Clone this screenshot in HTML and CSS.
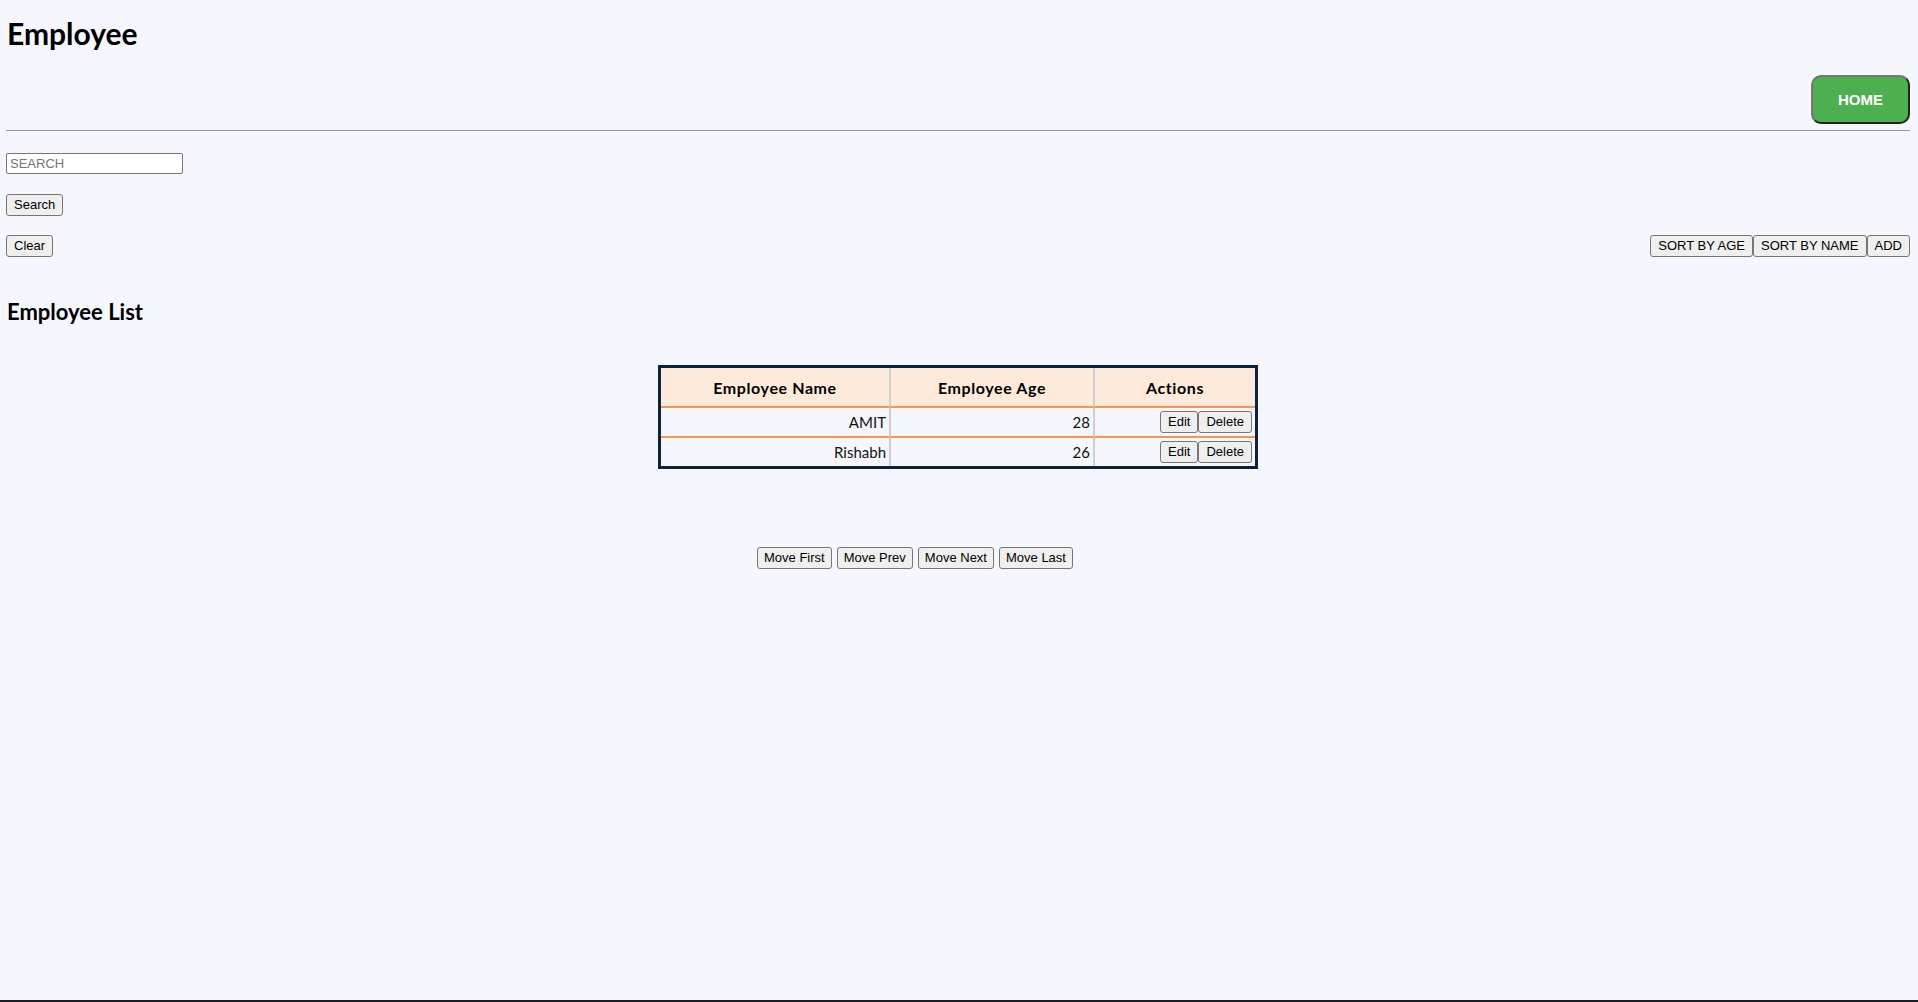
FILE: index.html
```html
<!DOCTYPE html>
<html lang="en">
<head>
<meta charset="utf-8">
<title>Employee</title>
<link rel="stylesheet" href="styles.css">
</head>
<body>
<div class="page">
  <header class="header">
    <h1 class="title">Employee</h1>
    <div class="nav">
      <button class="home-btn" type="button">HOME</button>
    </div>
    <hr class="divider">
  </header>

  <section class="controls">
    <input class="search-input" type="text" placeholder="SEARCH">
    <div class="search-row">
      <button class="btn" type="button">Search</button>
    </div>
    <div class="tool-row">
      <button class="btn" type="button">Clear</button>
      <div class="btn-group">
        <button class="btn" type="button">SORT BY AGE</button>
        <button class="btn" type="button">SORT BY NAME</button>
        <button class="btn" type="button">ADD</button>
      </div>
    </div>
  </section>

  <h2 class="subtitle">Employee List</h2>

  <table class="emp-table">
    <thead>
      <tr>
        <th class="col-name">Employee Name</th>
        <th class="col-age sep">Employee Age</th>
        <th class="col-actions sep">Actions</th>
      </tr>
    </thead>
    <tbody>
      <tr>
        <td>AMIT</td>
        <td class="sep">28</td>
        <td class="sep actions"><span class="btn-group"><button class="btn" type="button">Edit</button><button class="btn" type="button">Delete</button></span></td>
      </tr>
      <tr>
        <td>Rishabh</td>
        <td class="sep">26</td>
        <td class="sep actions"><span class="btn-group"><button class="btn" type="button">Edit</button><button class="btn" type="button">Delete</button></span></td>
      </tr>
    </tbody>
  </table>

  <div class="pager">
    <button class="btn pager-btn" type="button">Move First</button>
    <button class="btn pager-btn" type="button">Move Prev</button>
    <button class="btn pager-btn" type="button">Move Next</button>
    <button class="btn pager-btn" type="button">Move Last</button>
  </div>
</div>
</body>
</html>
```

FILE: styles.css
```css
* {
  box-sizing: border-box;
}

html, body {
  margin: 0;
  padding: 0;
}

body {
  background: #f5f6fe;
  color: #000;
  font-family: "Liberation Sans", Arial, sans-serif;
}

.page {
  min-height: 100vh;
  padding: 0 8px 0 6px;
  border-bottom: 2px solid #1c1c20;
  display: flex;
  flex-direction: column;
}

.title {
  margin: 15px 0 0 1px;
  font-family: Lato, "Open Sans", sans-serif;
  font-weight: 700;
  font-size: 30px;
  line-height: 36px;
}

.nav {
  display: flex;
  justify-content: flex-end;
  margin-top: 24px;
}

.home-btn {
  width: 99px;
  height: 49px;
  background: #4caf50;
  color: #fff;
  font-family: "Liberation Sans", Arial, sans-serif;
  font-weight: 700;
  font-size: 15px;
  border-radius: 10px;
  border: 2px solid;
  border-color: #767676 #222 #222 #767676;
  padding: 0;
}

.divider {
  margin: 6px 0 0 0;
  height: 0;
  border: 0;
  border-top: 1px solid #9a9a9a;
}

.controls {
  display: flex;
  flex-direction: column;
  margin-top: 22px;
}

.search-input {
  width: 177px;
  height: 21px;
  border: 1px solid #767676;
  border-radius: 2px;
  background: #fff;
  padding: 0 3px;
  font-family: "Liberation Sans", Arial, sans-serif;
  font-size: 13px;
  color: #000;
}

.search-input::placeholder {
  color: #757575;
}

.search-row {
  margin-top: 20px;
  display: flex;
}

.tool-row {
  margin-top: 19px;
  display: flex;
  justify-content: space-between;
  align-items: center;
}

.btn-group {
  display: inline-flex;
}

.btn {
  height: 22px;
  padding: 0 7px;
  border: 1px solid #767676;
  border-radius: 3px;
  background: #efefef;
  color: #000;
  font-family: "Liberation Sans", Arial, sans-serif;
  font-size: 13px;
  line-height: 20px;
}

.subtitle {
  margin: 42px 0 0 1px;
  font-family: Lato, "Open Sans", sans-serif;
  font-weight: 700;
  font-size: 22px;
  line-height: 1.2;
}

.emp-table {
  margin: 40px auto 0 auto;
  width: 600px;
  table-layout: fixed;
  border: 3px solid #0b2341;
  border-spacing: 0;
  border-collapse: separate;
  font-family: Lato, "Open Sans", sans-serif;
  font-size: 15px;
}

.emp-table th {
  height: 40px;
  background: #fdeadb;
  border-bottom: 2px solid #f5964a;
  font-weight: 700;
  font-size: 16px;
  letter-spacing: 0.6px;
  text-align: center;
  padding: 0;
}

.col-name { width: 228px; }
.col-age { width: 204px; }
.col-actions { width: 162px; }

.emp-table td {
  height: 28px;
  text-align: right;
  padding: 0 3px 0 3px;
  color: #111;
}

.emp-table tbody tr:first-child td {
  height: 30px;
  border-bottom: 2px solid #f5964a;
}

.emp-table .sep {
  border-left: 2px solid #cfcfcf;
}

.pager {
  margin-top: 78px;
  display: flex;
  justify-content: center;
  gap: 5px;
  padding-right: 86px;
}

.pager-btn {
  padding: 0 6px;
}
```
